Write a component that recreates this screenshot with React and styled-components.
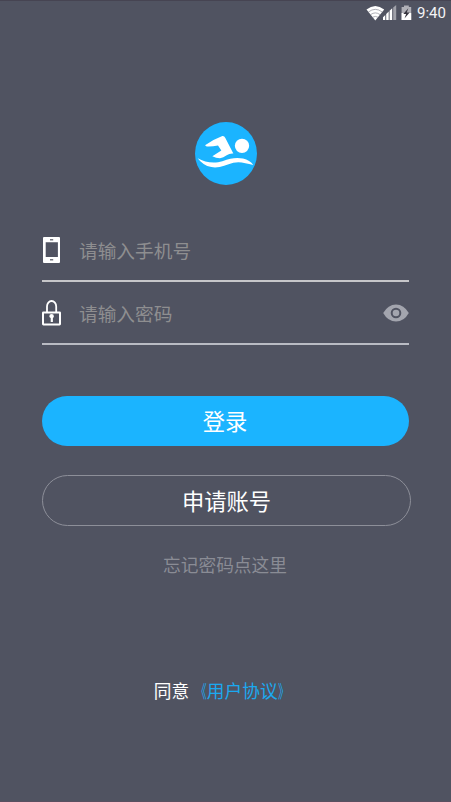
import React from 'react'
import styled, { createGlobalStyle } from 'styled-components'

const GlobalStyle = createGlobalStyle`
    * {
        box-sizing: border-box;
    }

    body {
        margin: 0;
        background: #505361;
        font-family: Roboto, 'Noto Sans CJK SC', sans-serif;
    }
`;

const Page = styled.div`
    display: flex;
    flex-direction: column;
    width: 451px;
    height: 802px;
    overflow: hidden;
    background: #505361;
    border-top: 1px solid #464452;
    border-bottom: 1px solid #594f60;
`;

const StatusBar = styled.div`
    display: flex;
    align-items: center;
    justify-content: flex-end;
    height: 23px;
    padding-right: 5px;
    color: #f4f4f6;
`;

const StatusIcons = styled.svg`
    display: block;
    margin-right: 4px;
`;

const Clock = styled.span`
    width: 29px;
    padding-top: 1px;
    font-size: 15px;
    line-height: 22px;
    white-space: nowrap;
`;

const Logo = styled.svg`
    display: block;
    flex-shrink: 0;
    width: 62px;
    height: 63px;
    margin: 98px 0 0 195px;
`;

const Form = styled.form`
    display: flex;
    flex-direction: column;
    width: 367px;
    margin: 34px 0 0 42px;
`;

const Field = styled.label`
    display: flex;
    align-items: center;
    height: 63px;
    border-bottom: 2px solid ${({line}) => line};
`;

const FieldIcon = styled.svg`
    display: block;
    flex-shrink: 0;
    width: 19px;
    height: 26px;
`;

const Input = styled.input`
    flex: 1;
    min-width: 0;
    height: 33px;
    margin-left: 18px;
    padding: 5px 0 0;
    border: 0;
    outline: none;
    background: transparent;
    color: #fff;
    font-family: inherit;
    font-size: 18.7px;
    line-height: 28px;

    &::placeholder {
        color: #8e8e90;
        opacity: 1;
    }
`;

const EyeIcon = styled.svg`
    display: block;
    flex-shrink: 0;
    cursor: pointer;
`;

const Button = styled.button`
    width: ${({outlined}) => (outlined ? '369px' : '367px')};
    height: ${({outlined}) => (outlined ? '51px' : '50px')};
    margin-top: ${({outlined}) => (outlined ? '29.5px' : '50.5px')};
    padding: 2px ${({outlined}) => (outlined ? '0' : '1px')} 0 0;
    border: ${({outlined}) => (outlined ? '1px solid #8d8f99' : '0')};
    border-radius: 26px;
    background: ${({outlined}) => (outlined ? 'transparent' : '#1bb4ff')};
    color: #fff;
    font-family: inherit;
    font-size: 22.3px;
    line-height: 48px;
    cursor: pointer;
`;

const Forgot = styled.a`
    margin: 26px 1px 0 0;
    color: #8a8c95;
    font-size: 17.7px;
    line-height: 28px;
    text-align: center;
`;

const Agreement = styled.div`
    margin: 98px 2px 0 0;
    color: #fff;
    font-size: 17.7px;
    line-height: 28px;
    text-align: center;
`;

const AgreementLink = styled.a`
    color: #1ba9f0;
`;

const Bracket = styled.span`
    display: inline-block;
    transform: scaleX(0.62);
    transform-origin: ${({side}) => side} center;
`;

const App = () => {
    return (
        <>
            <GlobalStyle />
            <Page>
                <StatusBar>
                    <StatusIcons width="47" height="16" viewBox="0 0 47 16">
                        <path d="M0.5 4.6Q9.3-2.4 18.2 4.6L9.3 15.5Z" fill="#fff" />
                        <path d="M2.4 7Q9.3 1.7 16.2 7M4.6 9.6Q9.3 6.2 14 9.6M6.7 12.2Q9.3 10.6 11.9 12.2" fill="none" stroke="#8c8d96" strokeWidth="0.7" />
                        <path d="M17 15V12.2L19.3 10V15ZM20.2 15V9L22.7 6.6V15ZM23.6 15V5.7L26.2 3.2V15Z" fill="#fff" />
                        <path d="M27.2 15V2.6L30.2 0V15Z" fill="#a0a1a9" />
                        <path d="M35.6 2H38V0.6H42.8V2H45.2V15H35.6Z" fill="#b0b0b7" />
                        <path d="M35.6 8H45.2V15H35.6Z" fill="#fff" />
                        <path d="M42.3 3.2L37.3 9H40.1L38.5 13.4L43.6 7.6H40.8Z" fill="#37353f" />
                    </StatusIcons>
                    <Clock>9:40</Clock>
                </StatusBar>

                <Logo viewBox="30 27 186 190" preserveAspectRatio="none">
                    <ellipse cx="123" cy="122" rx="93" ry="95" fill="#1bb4ff" />
                    <circle cx="171" cy="99" r="21.5" fill="#fff" />
                    <path d="M60 97Q83 80 112 69Q118 68 121 75L145 122Q134 121 125 127Q115 134 105 136Q93 136 82 130L109 113L99 98Q80 102 65 101Z" fill="#fff" />
                    <path d="M38 136C60 149 88 153 112 145C137 137 151 133 174 137Q195 142 205 157C181 151 165 145 145 150C122 157 103 167 79 163Q53 157 38 136Z" fill="#fff" />
                </Logo>

                <Form onSubmit={(e) => e.preventDefault()}>
                    <Field line="#c6c6c9">
                        <FieldIcon viewBox="0 0 19 26">
                            <path fillRule="evenodd" d="M2 0H17Q18 0 18 1V25Q18 26 17 26H2Q1 26 1 25V1Q1 0 2 0ZM3.7 5.2V20H15.9V5.2Z" fill="#fff" />
                            <path d="M8 2.7H11.2M8 22.8H11.2" stroke="#74767f" strokeWidth="1.5" />
                        </FieldIcon>
                        <Input type="tel" placeholder="请输入手机号" />
                    </Field>
                    <Field line="#b9bbc3">
                        <FieldIcon viewBox="0 0 19 26">
                            <path d="M5 12V6.4A4.6 5.4 0 0 1 14.2 6.4V12" fill="none" stroke="#fff" strokeWidth="1.8" />
                            <rect x="1" y="12.4" width="17" height="12" rx="0.4" fill="none" stroke="#fff" strokeWidth="2" />
                            <path d="M7.3 16.3A2.3 2.2 0 0 1 11.9 16.3Q11.9 17.3 10.9 18V22H8.7V18Q7.3 17.3 7.3 16.3Z" fill="#fff" />
                        </FieldIcon>
                        <Input type="password" placeholder="请输入密码" />
                        <EyeIcon width="26" height="18" viewBox="0 0 26 18">
                            <path d="M0.2 9Q5 0.4 13 0.4T25.8 9Q21 17.6 13 17.6T0.2 9Z" fill="#a3a5ae" />
                            <circle cx="13" cy="9" r="4.3" fill="none" stroke="#505361" strokeWidth="2" />
                        </EyeIcon>
                    </Field>
                    <Button type="submit">登录</Button>
                    <Button type="button" outlined="true">申请账号</Button>
                </Form>

                <Forgot>忘记密码点这里</Forgot>
                <Agreement>
                    同意
                    <AgreementLink>
                        <Bracket side="right">《</Bracket>用户协议<Bracket side="left">》</Bracket>
                    </AgreementLink>
                </Agreement>
            </Page>
        </>
    )
}

export default App
